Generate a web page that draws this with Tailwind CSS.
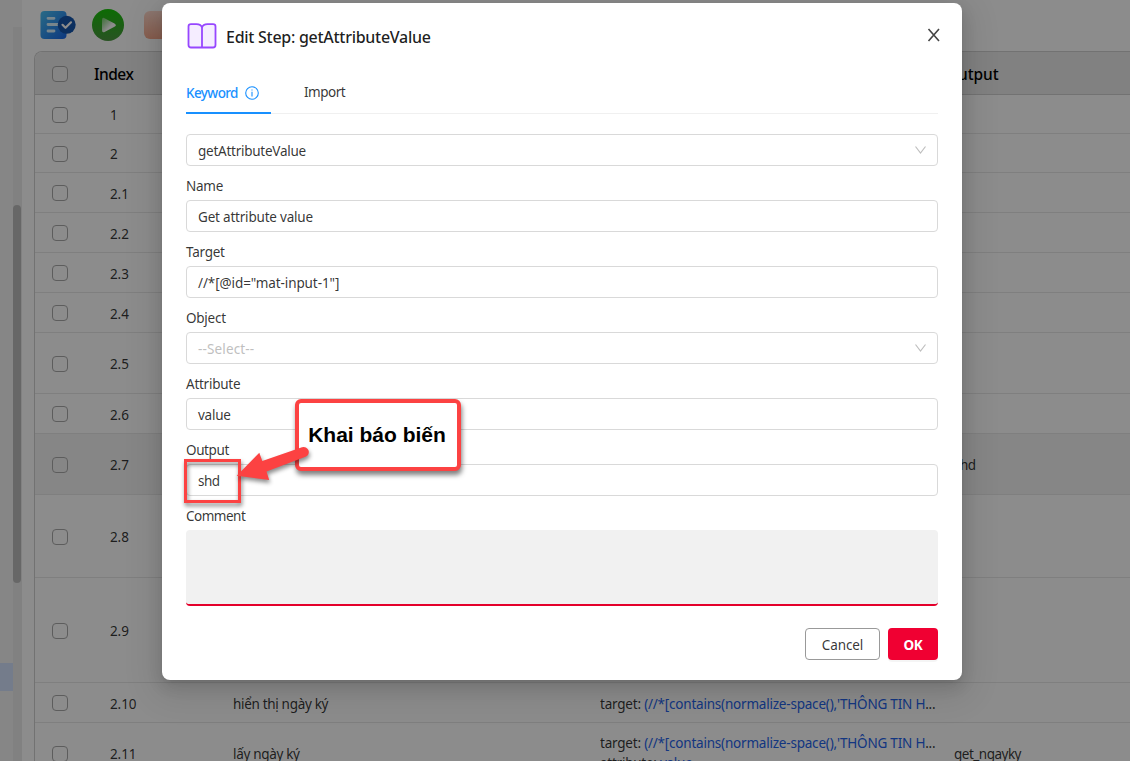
<!DOCTYPE html>
<html lang="vi">
<head>
<meta charset="utf-8">
<title>Edit Step</title>
<script src="https://cdn.jsdelivr.net/npm/@tailwindcss/browser@4"></script>
</head>
<body class="relative h-[761px] w-[1130px] overflow-hidden bg-white font-['Noto_Sans',sans-serif] text-[13.5px] leading-5 tracking-[-0.25px] text-black/80">
<div class="flex h-full">
  <aside class="flex w-[22px] shrink-0 bg-[#f5f5f5]">
    <div class="w-[13px] pt-[663px]"><div class="h-7 bg-[#d3e2fd]"></div></div>
    <div class="mt-[27px] w-[9px] bg-[#ececec] pt-[178px]"><div class="h-[378px] w-2 rounded-full bg-[#bcbcbc]"></div></div>
  </aside>
  <main class="flex w-[1108px] flex-col pl-3">
    <div class="flex h-[51px] shrink-0 items-start gap-4 pt-[9px] pl-1.5">
      <svg class="mt-0.5" width="36" height="29" viewBox="0 0 36 29"><defs><linearGradient id="b" x1="0" y1="0" x2="1" y2="1"><stop stop-color="#4cc3f5"/><stop offset="1" stop-color="#1766e8"/></linearGradient></defs><rect x=".5" y="0" width="26" height="28" rx="4" fill="url(#b)"/><path d="M8 7.3h6M8 13.5h10M8 20h6" stroke="#d9f3ff" stroke-width="2.8" stroke-linecap="round"/><circle cx="26.7" cy="13.8" r="9" fill="#1456ad"/><path d="m22.5 13.8 3 3 5.5-5.5" fill="none" stroke="#fff" stroke-width="2.2" stroke-linecap="round" stroke-linejoin="round"/></svg>
      <svg width="32" height="32" viewBox="0 0 32 32"><defs><linearGradient id="g" x1="0" y1="0" x2="0" y2="1"><stop stop-color="#18c408"/><stop offset="1" stop-color="#4b9640"/></linearGradient><linearGradient id="w" x1="0" y1="0" x2="1" y2="1"><stop stop-color="#c2e6bd" stop-opacity=".5"/><stop offset=".6" stop-color="#fff"/></linearGradient></defs><circle cx="16" cy="16" r="16" fill="url(#g)"/><path d="M10 11q0-3.4 3-1.6l9.5 5q2.8 1.8 0 3.4l-9.5 5q-3 1.6-3-1.6z" fill="url(#w)"/></svg>
      <div class="mt-0.5 ml-1 h-7 w-8 rounded-md bg-linear-to-b from-[#ffd8cb] to-[#f5a98d]"></div>
    </div>
    <div class="flex-1 overflow-hidden rounded-tl-lg border-t border-l border-[#d0d0d0] bg-white">
      <div class="flex h-[43px] items-center border-b border-[#d0d0d0] bg-[#ececec] pl-[17px] text-[15.5px] font-medium text-black"><span class="size-4 shrink-0 translate-y-px rounded border border-[#aaa] bg-white/30"></span><span class="w-[878px] shrink-0 pt-0.5 pl-[26px] tracking-[-0.5px]">Index</span><span class="pt-0.5 tracking-[-0.1px]">Output</span></div>
      <div id="rows"></div>
    </div>
  </main>
</div>
<div class="absolute inset-0 bg-black/45"></div>

<section class="absolute top-[3px] left-[162px] flex h-[677px] w-[800px] flex-col rounded-lg bg-white px-6 shadow-[0_6px_16px_0_rgba(0,0,0,0.12),0_3px_6px_-4px_rgba(0,0,0,0.16),0_9px_32px_10px_rgba(0,0,0,0.09)]">
  <header class="flex h-[66px] shrink-0 items-center text-black/88">
    <svg class="ml-px" width="30" height="26" viewBox="0 0 30 26"><path d="M4 1.2h5.500q4.500 0 5.500 3.300 1-3.300 5.500-3.300H26q2.500 0 2.500 2.300v18.500q0 2.500-2.500 2.500H4q-2.500 0-2.500-2.500V3.500q0-2.300 2.500-2.300zM15 4v20" fill="#f5edff" stroke="#9747ff" stroke-width="1.8"/></svg>
    <h1 class="ml-[9px] pt-0.5 text-[16px] font-medium tracking-[-0.28px]">Edit Step: getAttributeValue</h1>
    <svg class="mr-[-3px] mb-0.5 ml-auto" width="14" height="14" viewBox="0 0 14 14"><path d="m1.500 1 10.500 12M12 1 1.500 13" stroke="#444" stroke-width="1.6"/></svg>
  </header>
  <nav class="flex h-[45px] shrink-0 gap-8 border-b border-[#f0f0f0]"><span class="flex h-[45px] w-[85px] items-center gap-[7px] border-b-2 border-[#1890ff] pt-1 font-medium tracking-[-0.600px] text-[#1890ff]">Keyword<svg width="14" height="14" viewBox="0 0 14 14" fill="none" stroke="#1890ff" stroke-width="1.1"><circle cx="7" cy="7" r="6.300"/><path d="M7 5.800v4.700M7 3.400v1.200"/></svg></span><span class="flex items-center pt-0.5 pl-px tracking-[-0.5px]">Import</span></nav>
  <div class="flex flex-col pt-5">
    <div class="flex h-8 items-center justify-between rounded border border-[#d9d9d9] px-[11px]"><span class="pt-0.5">getAttributeValue</span><svg width="11" height="8" viewBox="0 0 11 8" fill="none" stroke="#bfbfbf" stroke-width="1.200"><path d="m.5.5 5 6.500 5-6.500"/></svg></div>
    <label class="flex h-[34px] items-center pt-1.5">Name</label>
    <div class="flex h-8 items-center rounded border border-[#d9d9d9] px-[11px] pt-0.5 tracking-[-0.2px]">Get attribute value</div>
    <label class="flex h-[34px] items-center pt-1.5">Target</label>
    <div class="flex h-8 items-center rounded border border-[#d9d9d9] px-[11px] pt-0.5 tracking-[-0.1px]">//*[@id="mat-input-1"]</div>
    <label class="flex h-[34px] items-center pt-1.5">Object</label>
    <div class="flex h-8 items-center justify-between rounded border border-[#d9d9d9] px-[11px]"><span class="pt-0.5 tracking-[0.15px] text-[#bfbfbf]">--Select--</span><svg width="11" height="8" viewBox="0 0 11 8" fill="none" stroke="#bfbfbf" stroke-width="1.200"><path d="m.5.5 5 6.500 5-6.500"/></svg></div>
    <label class="flex h-[34px] items-center pt-1.5">Attribute</label>
    <div class="flex h-8 items-center rounded border border-[#d9d9d9] px-[11px] pt-0.5">value</div>
    <label class="flex h-[34px] items-center pt-1.5 tracking-[-0.4px]">Output</label>
    <div class="flex h-8 items-center rounded border border-[#d9d9d9] px-[11px] pt-0.5 tracking-[-0.5px]">shd</div>
    <label class="flex h-[34px] items-center pt-1.5 tracking-[-0.5px]">Comment</label>
    <div class="h-[76px] rounded border-b-2 border-[#e4002b] bg-[#f1f1f1]"></div>
    <div class="mt-[22px] flex justify-end gap-2"><button class="h-8 w-[75px] rounded border border-[#999] pt-0.5 tracking-[-0.1px]">Cancel</button><button class="h-8 w-[50px] rounded bg-[#f00032] pt-0.5 font-bold text-white shadow-[0_2px_0_rgba(0,0,0,0.04)]">OK</button></div>
  </div>
</section>

<div class="absolute top-[459px] left-[184px] h-11 w-[57px] border-3 border-[#fc4242] drop-shadow-[1px_3px_2px_rgba(0,0,0,0.5)]"></div>
<div class="absolute top-[399px] left-[295px] flex h-[72px] w-[166px] items-center justify-center rounded-md border-4 border-[#fc4242] bg-white pr-0.5 font-['Liberation_Sans',sans-serif] text-[21px] font-bold tracking-normal whitespace-nowrap text-black shadow-[1px_4px_5px_rgba(0,0,0,0.5)]">Khai báo biến</div>
<svg class="absolute top-[445px] left-[230px] drop-shadow-[1px_3px_2px_rgba(0,0,0,0.45)]" width="84" height="42" viewBox="0 0 84 42"><path d="M6.700 30.700 29.300 7.700l3 8.300L72 2.300a5 5 0 0 1 3.500 9.500L36.500 26.500l2.700 8.500z" fill="#fc4242"/></svg>

<script>
const target='<span class="w-[338px] truncate tracking-[-0.21px]">target: <span class="text-[#2463eb]">(//*[contains(normalize-space(),\'THÔNG TIN H</span>...</span>';
const rows=[[39,'1'],[39,'2'],[40,'2.1'],[40,'2.2'],[40,'2.3'],[40,'2.4'],[61,'2.5'],[40,'2.6'],[61,'2.7','','','shd'],[83,'2.8'],[105,'2.9'],[40,'2.10','hiển thị ngày ký',target],[61,'2.11','lấy ngày ký',target+'<span>attribute: <span class="text-[#2463eb]">value</span></span>','get_ngayky']];
document.getElementById('rows').innerHTML=rows.map(([h,i,name='',t='',o=''])=>`<div class="flex items-center border-b border-[#e8e8e8] pt-px pl-[17px] ${i==='2.7'?'bg-[#f5f5f5]':''}" style="height:${h}px"><span class="size-4 shrink-0 rounded border border-[#aaa]"></span><span class="w-[165px] shrink-0 pt-px pl-[42px] tracking-[-0.1px]">${i}</span><span class="w-[367px] shrink-0 pt-px tracking-[-0.32px]">${name}</span><span class="flex w-[354px] shrink-0 flex-col ${i==='2.11'?'pb-px':'pt-px'}">${t}</span><span class="pt-px tracking-[-0.5px]">${o}</span></div>`).join('');
</script>
</body>
</html>
